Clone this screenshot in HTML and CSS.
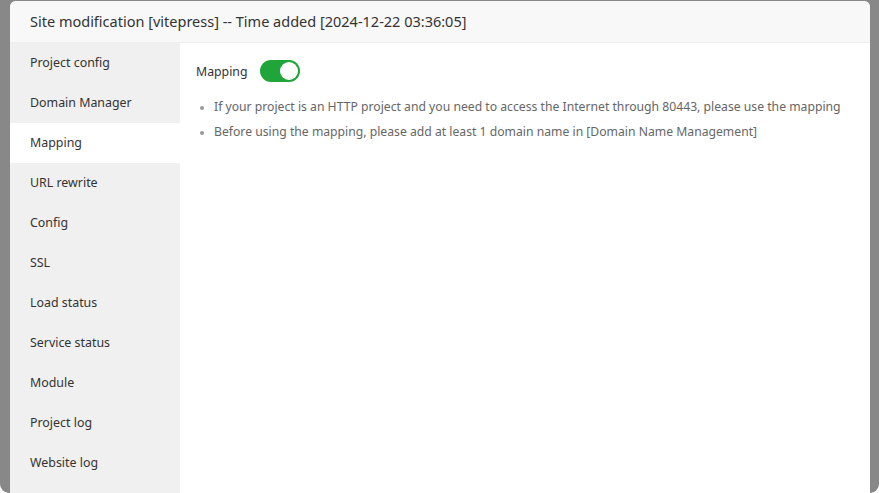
FILE: index.html
```html
<!DOCTYPE html>
<html>
<head>
<meta charset="utf-8">
<link rel="stylesheet" href="styles.css">
</head>
<body>
<div class="backdrop">
  <div class="dialog">
    <div class="dialog-header">Site modification [vitepress] -- Time added [2024-12-22 03:36:05]</div>
    <div class="dialog-body">
      <ul class="side-menu">
        <li class="side-item">Project config</li>
        <li class="side-item">Domain Manager</li>
        <li class="side-item active">Mapping</li>
        <li class="side-item">URL rewrite</li>
        <li class="side-item">Config</li>
        <li class="side-item">SSL</li>
        <li class="side-item">Load status</li>
        <li class="side-item">Service status</li>
        <li class="side-item">Module</li>
        <li class="side-item">Project log</li>
        <li class="side-item">Website log</li>
      </ul>
      <div class="content">
        <div class="switch-row">
          <span class="switch-label">Mapping</span>
          <span class="switch on"><span class="knob"></span></span>
        </div>
        <ul class="tips">
          <li>If your project is an HTTP project and you need to access the Internet through 80443, please use the mapping</li>
          <li>Before using the mapping, please add at least 1 domain name in [Domain Name Management]</li>
        </ul>
      </div>
    </div>
  </div>
</div>
</body>
</html>
```
FILE: styles.css
```css
html, body {
  margin: 0;
  padding: 0;
  background: #ffffff;
}
body {
  font-family: "Noto Sans", "Liberation Sans", sans-serif;
  color: #333;
}
.backdrop {
  width: 879px;
  height: 493px;
  background: #888888;
  border-radius: 0 0 9px 9px;
  padding: 1px 9px 0 10px;
  box-sizing: border-box;
  overflow: hidden;
}
.dialog {
  background: #fff;
  height: 100%;
  border-radius: 6px 6px 0 0;
  display: flex;
  flex-direction: column;
  overflow: hidden;
}
.dialog-header {
  height: 41px;
  line-height: 40px;
  background: #f8f8f8;
  border-bottom: 1px solid #eeeeee;
  padding-left: 20px;
  font-size: 14.5px;
  color: #333;
  flex: none;
}
.dialog-body {
  display: flex;
  flex: 1;
  min-height: 0;
}
.side-menu {
  list-style: none;
  margin: 0;
  padding: 0;
  width: 170px;
  background: #f0f0f0;
  flex: none;
}
.side-item {
  height: 40px;
  line-height: 40px;
  padding-left: 20px;
  font-size: 12.4px;
  color: #333;
  box-sizing: border-box;
}
.side-item.active {
  background: #fff;
}
.content {
  flex: 1;
  padding: 17px 16px 0 16px;
}
.switch-row {
  display: flex;
  align-items: center;
  height: 22px;
}
.switch-label {
  font-size: 12.3px;
  color: #333;
  margin-right: 12px;
}
.switch {
  width: 40px;
  height: 22px;
  border-radius: 11px;
  background: #20a53a;
  position: relative;
  display: inline-block;
}
.knob {
  position: absolute;
  width: 18px;
  height: 18px;
  border-radius: 50%;
  background: #fff;
  top: 2px;
  right: 2px;
}
.tips {
  margin: 12px 0 0 0;
  padding-left: 18px;
  font-size: 12.2px;
  color: #666;
}
.tips li {
  line-height: 25px;
}
.tips li::marker {
  color: #999;
  font-size: 10px;
}
```
